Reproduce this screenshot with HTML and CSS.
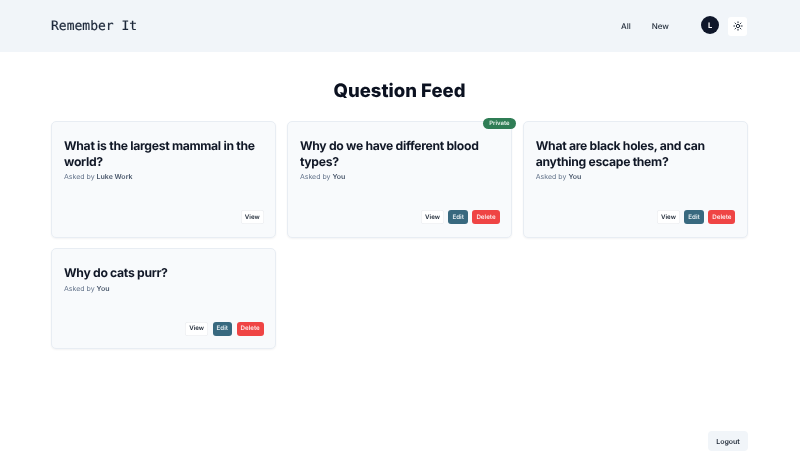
FILE: index.html
```html
<!DOCTYPE html>
<html lang="en">
<head>
<meta charset="utf-8">
<title>Remember It</title>
<link rel="stylesheet" href="styles.css">
</head>
<body>
<div class="page">
  <header class="topbar">
    <div class="logo">Remember It</div>
    <div class="topbar-right">
      <nav class="nav"><a>All</a><a>New</a></nav>
      <div class="avatar">L</div>
      <button class="theme">
        <svg width="10" height="10" viewBox="0 0 24 24" fill="none" stroke="#1f2937" stroke-width="2.4" stroke-linecap="round"><circle cx="12" cy="12" r="4"/><path d="M12 2v2M12 20v2M4.9 4.9l1.4 1.4M17.7 17.7l1.4 1.4M2 12h2M20 12h2M6.3 17.7l-1.4 1.4M19.1 4.9l-1.4 1.4"/></svg>
      </button>
    </div>
  </header>
  <main class="main">
    <h1 class="title">Question Feed</h1>
    <section class="grid">
      <article class="card">
        <h2>What is the largest mammal in the world?</h2>
        <p class="by">Asked by <b>Luke Work</b></p>
        <div class="actions"><button class="btn view">View</button></div>
      </article>
      <article class="card">
        <span class="badge">Private</span>
        <h2>Why do we have different blood types?</h2>
        <p class="by">Asked by <b>You</b></p>
        <div class="actions"><button class="btn view">View</button><button class="btn edit">Edit</button><button class="btn del">Delete</button></div>
      </article>
      <article class="card">
        <h2>What are black holes, and can anything escape them?</h2>
        <p class="by">Asked by <b>You</b></p>
        <div class="actions"><button class="btn view">View</button><button class="btn edit">Edit</button><button class="btn del">Delete</button></div>
      </article>
      <article class="card">
        <h2>Why do cats purr?</h2>
        <p class="by">Asked by <b>You</b></p>
        <div class="actions"><button class="btn view">View</button><button class="btn edit">Edit</button><button class="btn del">Delete</button></div>
      </article>
    </section>
  </main>
  <footer class="foot"><button class="logout">Logout</button></footer>
</div>
</body>
</html>
```
FILE: styles.css
```css
* { box-sizing: border-box; }
html, body { margin: 0; padding: 0; height: 100%; }
body { font-family: Inter, "Liberation Sans", sans-serif; color: #111827; background: #fff; text-rendering: geometricPrecision; }
.page { height: 458px; display: flex; flex-direction: column; overflow: hidden; will-change: transform; }
.topbar { height: 52px; background: #f1f5f9; padding: 0 53px 0 51px; display: flex; align-items: center; justify-content: space-between; flex: none; }
.logo { font-family: "DejaVu Sans Mono", monospace; font-size: 13px; line-height: 14px; color: #1e293b; margin-top: 1px; -webkit-text-stroke: .2px #1e293b; }
.topbar-right { display: flex; align-items: center; }
.nav { display: flex; gap: 21px; font-size: 8px; font-weight: 500; color: #1f2937; margin-right: 32px; }
.avatar { width: 18px; height: 18px; border-radius: 50%; background: #0f172a; color: #fff; font-size: 7.5px; font-weight: 700; display: flex; align-items: center; justify-content: center; margin-right: 9px; margin-bottom: 2px; }
.theme { width: 19px; height: 19px; border: 0; padding: 0; background: #fff; border-radius: 3px; display: flex; align-items: center; justify-content: center; }
.main { flex: 1; padding: 0 52px 0 51px; }
.title { margin: 27px 0 18px; height: 24px; line-height: 24px; font-size: 18.5px; font-weight: 800; text-align: center; color: #0b1120; }
.grid { display: grid; grid-template-columns: repeat(3, 1fr); gap: 10.7px; }
.card { position: relative; background: #f8fafc; border: 1px solid #e8edf3; border-radius: 5px; padding: 12px 11.5px 12.5px 12px; display: flex; flex-direction: column; box-shadow: 0 1px 2px rgba(15, 23, 42, .05); }
.card h2 { margin: 4px 0 0; font-size: 12.2px; line-height: 15.5px; font-weight: 700; letter-spacing: -.31px; color: #111827; }
.by { margin: 1px 0 0; font-size: 7px; line-height: 13px; color: #64748b; }
.by b { font-weight: 600; color: #475569; }
.actions { margin-top: auto; display: flex; justify-content: flex-end; gap: 4.5px; padding-top: 27px; }
.btn { height: 14px; padding: 0 4px; border: 0; border-radius: 3px; font: 600 6.2px Inter, sans-serif; text-rendering: geometricPrecision; }
.view { background: #fff; color: #1f2937; box-shadow: inset 0 0 0 .5px #e5e7eb; }
.edit { background: #38697f; color: #e5eef2; }
.del { background: #ef4444; color: #fde8e8; }
.badge { position: absolute; top: -4.5px; right: -4.5px; height: 11px; line-height: 11px; padding: 0 6px; border-radius: 6px; background: #2f7d55; color: #e8f4ec; font-size: 6px; font-weight: 600; }
.foot { flex: none; display: flex; justify-content: flex-end; padding: 0 52px 7px 0; }
.logout { width: 40px; height: 20px; border: 0; border-radius: 4px; background: #f1f5f9; color: #1f2937; font: 600 7px Inter, sans-serif; text-rendering: geometricPrecision; }
```
